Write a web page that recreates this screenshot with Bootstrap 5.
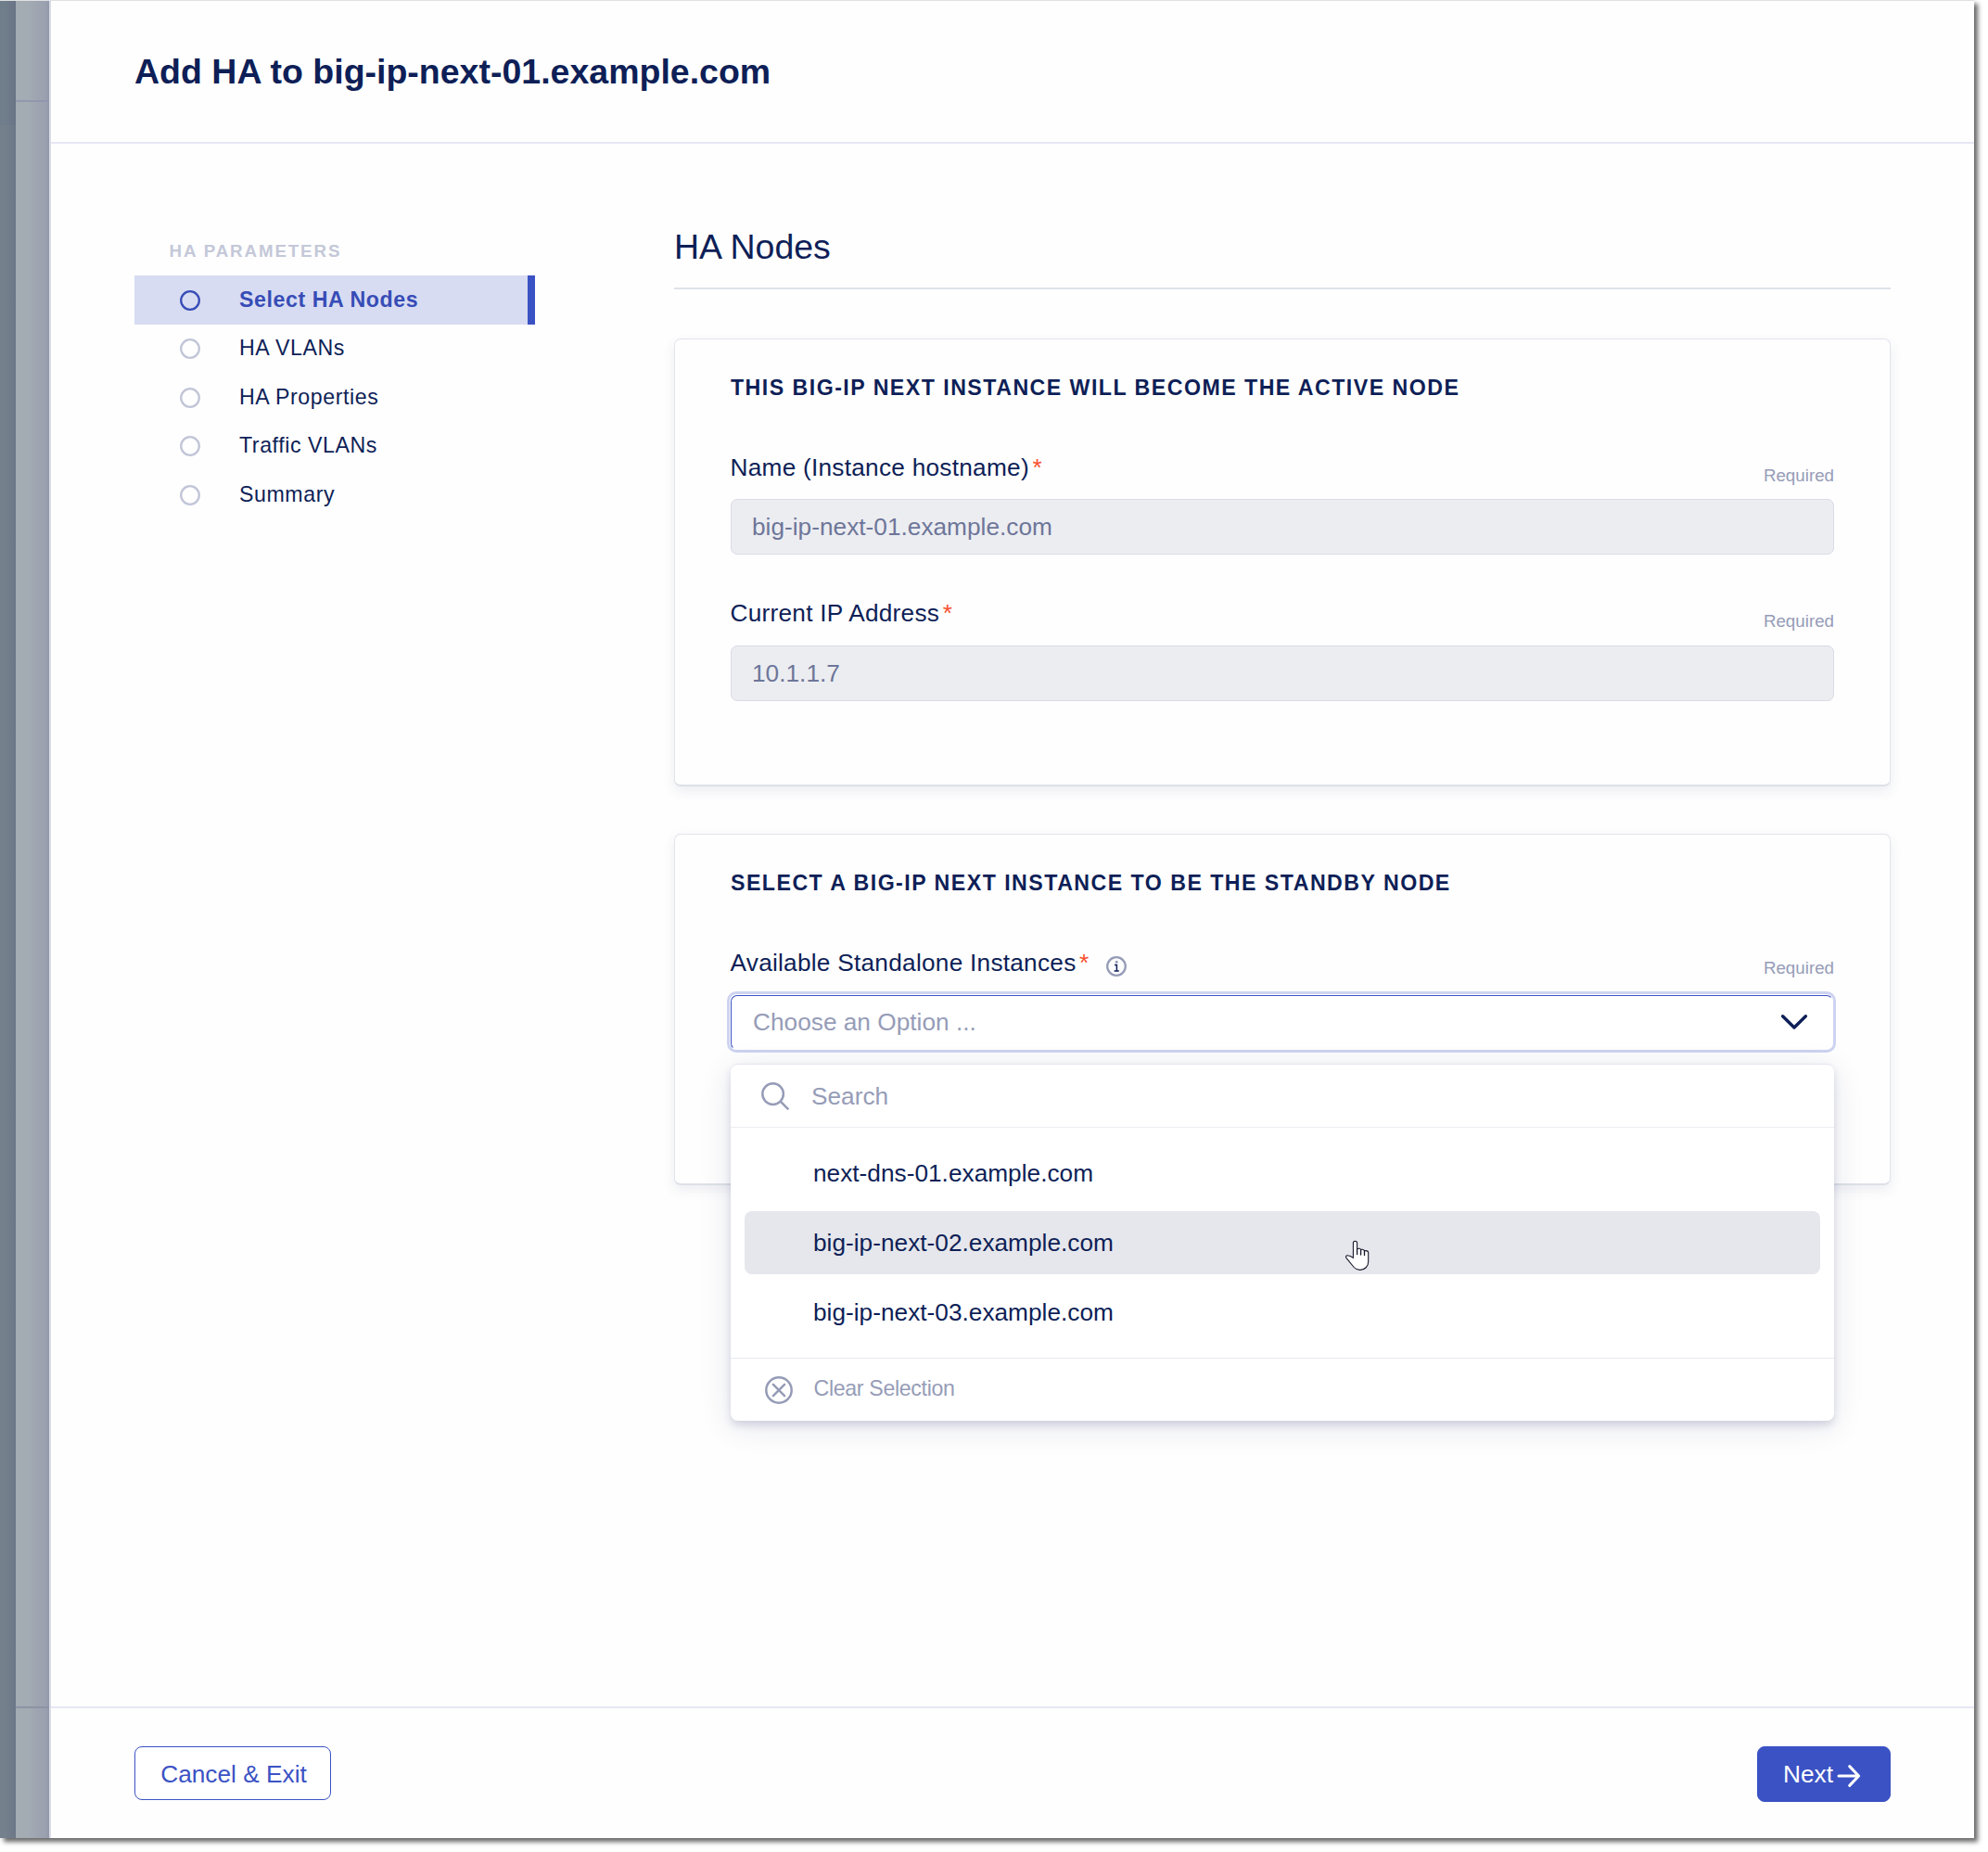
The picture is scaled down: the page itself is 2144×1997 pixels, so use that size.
<!DOCTYPE html>
<html lang="en">
<head>
<meta charset="utf-8">
<meta name="viewport" content="width=device-width, initial-scale=1">
<title>Add HA</title>
<link href="https://cdn.jsdelivr.net/npm/bootstrap@5.3.0/dist/css/bootstrap.min.css" rel="stylesheet">
<style>
  :root { --navy: #0e1f57; --brand: #3b52c4; --muted: #969cb7; --line: #e6e7f5; }
  body { font-family: "Liberation Sans", Arial, sans-serif; font-size: 26.25px; line-height: 36px; color: var(--navy); background: #fff; height: 1997px; }
  .app-window { width: 2129px; height: 1982px; box-shadow: 4px 4px 5px rgba(0,0,0,.6); background: #fefefe; }
  .strip-outer { width: 17px; background: linear-gradient(90deg, #74808c 40%, #6b7687); border-top: 1px solid #dfe1e3; }
  .strip-outer .strip-head { height: 134px; background: rgba(95,110,135,.15); }
  .strip-inner { width: 36px; background: linear-gradient(90deg, #a3abb3 35%, #9aa0af 90%, #9197a9); border-top: 1px solid #dfe1e3; }
  .strip-inner .strip-head { height: 109px; border-bottom: 2px solid #9198ad; }
  .strip-inner .strip-foot { height: 142px; border-top: 2px solid #8d93a4; }
  .drawer { border-left: 2px solid #d9dbe5; border-top: 1px solid #e0e1e1; }
  .drawer-head { height: 154px; padding: 0 90px; border-bottom: 2px solid var(--line); }
  .drawer-head h1 { font-size: 37.5px; line-height: 56px; font-weight: 700; }
  .drawer-body { padding: 0 90px; }
  .drawer-foot { height: 142px; padding: 41px 90px 0; border-top: 2px solid var(--line); }
  .steps { width: 432px; padding-top: 101px; margin-right: 150px; font-size: 23.2px; letter-spacing: .56px; }
  .steps-title { font-size: 18.75px; line-height: 28px; letter-spacing: 1.87px; color: #c4c8d8; padding-left: 37.5px; padding-top: 1px; margin-bottom: 12px; }
  .step { height: 52.5px; padding-left: 49px; border-right: 8px solid transparent; color: var(--navy); }
  .step svg { width: 22px; height: 22px; margin: 1px 42px 0 0; color: #c1c5d7; flex: none; }
  .step span { padding-bottom: 1.5px; }
  .step.current { background: #d8dcf2; border-right-color: var(--brand); color: #374cb6; font-weight: 700; }
  .step.current svg { color: #374cb6; }
  .content-pane { padding-top: 89px; }
  .content-pane h2 { font-size: 37.5px; line-height: 45px; height: 68px; border-bottom: 2px solid #dee2e9; margin-bottom: 53px; }
  .node-card { border: 1px solid #e2e4ec; border-bottom: 2px solid #dde1e7; border-radius: 7px; padding: 35px 60px 0; background: #fefefe; box-shadow: 0 5px 14px rgba(40,50,110,.09); }
  .node-active { height: 483px; margin-bottom: 51px; }
  .node-standby { height: 379px; }
  .node-card h3 { font-size: 23.2px; line-height: 34px; font-weight: 700; letter-spacing: 1.46px; margin-bottom: 51px; }
  .field { margin-bottom: 45px; }
  .field-head { height: 36px; margin-bottom: 16px; letter-spacing: .24px; }
  .field + .field .field-head { margin-bottom: 17px; }
  .star { color: #f9512f; margin-left: 3.5px; letter-spacing: 0; }
  .node-card label { margin-left: -.5px; }
  .req { font-size: 18.75px; letter-spacing: 0; color: var(--muted); margin-top: 9px; }
  .node-standby .req { margin-top: 6px; }
  .info-icon { width: 22px; height: 22px; margin-left: 19px; }
  .ro-field { height: 60px; line-height: 58px; padding: 0 22px; border: 1px solid #dadce6; border-radius: 7px; background: #ecedf1; color: #6e7699; }
  .picker { height: 60px; margin: 0 1px 0 -1px; border-radius: 7px; box-shadow: 0 0 0 3px #cdd3f0; padding: 1px 0 0 1px; background: #fff; }
  .picker-inner { height: 59px; border: 1px solid var(--brand); border-right-color: transparent; border-bottom-color: transparent; border-radius: 7px; padding: 0 26px 2px 23px; color: var(--muted); }
  .picker-inner svg { margin-top: 1px; }
  .option-menu { left: 0; top: 127px; width: 1190px; background: #fff; border-top: 1px solid #e6e7ee; border-radius: 8px; box-shadow: 0 5px 8px rgba(30,35,100,.15), 0 6px 34px rgba(30,35,100,.11); z-index: 5; }
  .menu-search { height: 68px; padding-left: 33px; border-bottom: 1px solid #ebebf1; color: var(--muted); }
  .menu-list { padding: 15px; gap: 7px; height: 248px; }
  .option { height: 68px; line-height: 68px; padding-left: 74px; border-radius: 8px; }
  .option.hovered { background: #e6e7ec; }
  .menu-clear { height: 68px; padding-left: 37px; border-top: 1px solid #e8e9f1; font-size: 23.2px; letter-spacing: -.34px; color: var(--muted); }
  .menu-clear svg { margin-right: 22.5px; }
  .menu-clear span { padding-bottom: 3px; }
  .hand { left: 662px; top: 189px; }
  .drawer .btn { font-size: 26.25px; line-height: 36px; border-radius: 8px; }
  .btn-cancel { width: 212px; height: 58px; padding: 1px 0 0 2px; border: 1px solid var(--brand); color: var(--brand); background: #fff; }
  .btn-next { width: 144px; height: 60px; padding: 0 0 0 27px; border: 1px solid var(--brand); background: var(--brand); color: #fff; }
  .btn-next svg { margin: 3px 0 0 4px; }
</style>
<script src="https://cdn.jsdelivr.net/npm/bootstrap@5.3.0/dist/js/bootstrap.bundle.min.js"></script>
</head>
<body>
<div class="app-window d-flex">
  <div class="strip-outer flex-shrink-0"><div class="strip-head"></div></div>
  <div class="strip-inner flex-shrink-0 d-flex flex-column justify-content-between">
    <div class="strip-head"></div><div class="strip-foot"></div>
  </div>
  <section class="drawer flex-grow-1 d-flex flex-column">
    <header class="drawer-head d-flex align-items-center"><h1 class="m-0">Add HA to big-ip-next-01.example.com</h1></header>

    <div class="drawer-body flex-grow-1 d-flex">
      <nav class="steps flex-shrink-0">
        <div class="steps-title fw-bold">HA PARAMETERS</div>
        <div class="step current d-flex align-items-center"><svg viewBox="0 0 22 22"><circle cx="11" cy="11" r="9.8" fill="none" stroke="currentColor" stroke-width="2.3"/></svg><span>Select HA Nodes</span></div>
        <div class="step d-flex align-items-center"><svg viewBox="0 0 22 22"><circle cx="11" cy="11" r="9.8" fill="none" stroke="currentColor" stroke-width="2.3"/></svg><span>HA VLANs</span></div>
        <div class="step d-flex align-items-center"><svg viewBox="0 0 22 22"><circle cx="11" cy="11" r="9.8" fill="none" stroke="currentColor" stroke-width="2.3"/></svg><span>HA Properties</span></div>
        <div class="step d-flex align-items-center"><svg viewBox="0 0 22 22"><circle cx="11" cy="11" r="9.8" fill="none" stroke="currentColor" stroke-width="2.3"/></svg><span>Traffic VLANs</span></div>
        <div class="step d-flex align-items-center"><svg viewBox="0 0 22 22"><circle cx="11" cy="11" r="9.8" fill="none" stroke="currentColor" stroke-width="2.3"/></svg><span>Summary</span></div>
      </nav>

      <main class="content-pane flex-grow-1">
        <h2 class="fw-normal">HA Nodes</h2>

        <div class="node-card node-active">
          <h3>THIS BIG-IP NEXT INSTANCE WILL BECOME THE ACTIVE NODE</h3>
          <div class="field">
            <div class="field-head d-flex justify-content-between"><label>Name (Instance hostname)<span class="star">*</span></label><span class="req">Required</span></div>
            <div class="ro-field">big-ip-next-01.example.com</div>
          </div>
          <div class="field">
            <div class="field-head d-flex justify-content-between"><label>Current IP Address<span class="star">*</span></label><span class="req">Required</span></div>
            <div class="ro-field">10.1.1.7</div>
          </div>
        </div>

        <div class="node-card node-standby">
          <h3>SELECT A BIG-IP NEXT INSTANCE TO BE THE STANDBY NODE</h3>
          <div class="position-relative">
            <div class="field-head d-flex justify-content-between">
              <div class="d-flex align-items-center"><label>Available Standalone Instances<span class="star">*</span></label>
                <svg class="info-icon mt-2" viewBox="0 0 22 22"><circle cx="11" cy="11" r="9.8" fill="none" stroke="#969cb7" stroke-width="2.3"/><circle cx="11.2" cy="6.3" r="1.5" fill="#969cb7"/><path d="M9 9.6h2.4v6.2M8.6 16h5.2" fill="none" stroke="#0e1f57" stroke-width="1.5"/></svg>
              </div>
              <span class="req">Required</span>
            </div>
            <div class="picker">
              <div class="picker-inner d-flex align-items-center justify-content-between">
                <span>Choose an Option ...</span>
                <svg width="30" height="18" viewBox="0 0 30 18"><path d="M2.6 2.8 15 15 27.4 2.8" fill="none" stroke="#0e1f57" stroke-width="3.4" stroke-linecap="round" stroke-linejoin="round"/></svg>
              </div>
            </div>

            <div class="option-menu position-absolute">
              <div class="menu-search d-flex align-items-center">
                <svg width="30" height="30" viewBox="0 0 30 30" class="me-4"><g fill="none" stroke="#969cb7" stroke-width="2.5"><circle cx="12.6" cy="12.6" r="11.3"/><path d="M20.7 20.7 29.3 29.3"/></g></svg>
                <span>Search</span>
              </div>
              <div class="menu-list d-flex flex-column">
                <div class="option">next-dns-01.example.com</div>
                <div class="option hovered">big-ip-next-02.example.com</div>
                <div class="option">big-ip-next-03.example.com</div>
              </div>
              <div class="menu-clear d-flex align-items-center">
                <svg width="30" height="30" viewBox="0 0 30 30" class="flex-shrink-0"><g fill="none" stroke="#969cb7" stroke-width="2.5"><circle cx="15" cy="15" r="13.7"/><path d="M8.9 8.9 21.1 21.1M21.1 8.9 8.9 21.1" stroke-linecap="round"/></g></svg>
                <span>Clear Selection</span>
              </div>
              <svg class="hand position-absolute" width="28" height="34" viewBox="0 0 28 34"><path d="M9.4 19.2V3.4a2.1 2.1 0 0 1 4.2 0v6.4c1.8-1.2 3.9-.4 4 .8 1.7-.7 3.8-.1 3.8 1.2 2-.4 4.3 0 4.3 1.8V23.5c0 5-3.8 8.7-8.7 8.9-3 .1-4.900-.8-6.800-2.900L1.900 19.300c-.9-1.300-.2-2.600 1.400-2.500 2.200.1 4.400 1.200 6.100 2.400Z" fill="#fff" stroke="#17172b" stroke-width="1.1"/><path d="M13.6 9.500v6M17.600 10.700v5.400M21.500 12v4.500" stroke="#17172b" stroke-width="1.3" fill="none" stroke-linecap="round"/></svg>
            </div>
          </div>
        </div>
      </main>
    </div>

    <footer class="drawer-foot d-flex justify-content-between align-items-start">
      <button class="btn btn-cancel">Cancel &amp; Exit</button>
      <button class="btn btn-next d-flex align-items-center">Next<svg width="26" height="28" viewBox="0 0 26 28"><path d="M2 14H23.4M13.7 3.6 23.6 14 13.7 24.4" fill="none" stroke="#fff" stroke-width="3" stroke-linecap="round" stroke-linejoin="round"/></svg></button>
    </footer>
  </section>
</div>
</body>
</html>
